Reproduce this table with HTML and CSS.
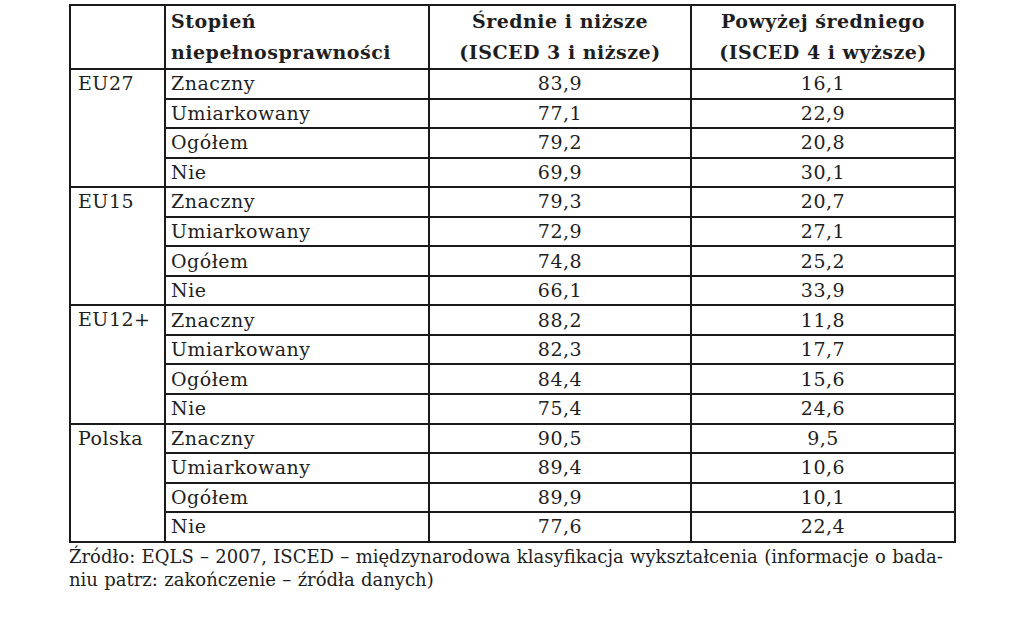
FILE: index.html
```html
<!DOCTYPE html>
<html lang="pl">
<head>
<meta charset="utf-8">
<link rel="stylesheet" href="styles.css">
</head>
<body>
<div class="page">
<table class="data">
  <colgroup>
    <col class="w-region">
    <col class="w-degree">
    <col class="w-mid">
    <col class="w-high">
  </colgroup>
  <thead>
    <tr>
      <th></th>
      <th class="h-degree">Stopień<br>niepełnosprawności</th>
      <th class="h-num">Średnie i niższe<br>(ISCED 3 i niższe)</th>
      <th class="h-num">Powyżej średniego<br>(ISCED 4 i wyższe)</th>
    </tr>
  </thead>
  <tbody>
    <tr><td class="region" rowspan="4">EU27</td><td>Znaczny</td><td class="num">83,9</td><td class="num">16,1</td></tr>
    <tr><td>Umiarkowany</td><td class="num">77,1</td><td class="num">22,9</td></tr>
    <tr><td>Ogółem</td><td class="num">79,2</td><td class="num">20,8</td></tr>
    <tr><td>Nie</td><td class="num">69,9</td><td class="num">30,1</td></tr>
    <tr><td class="region" rowspan="4">EU15</td><td>Znaczny</td><td class="num">79,3</td><td class="num">20,7</td></tr>
    <tr><td>Umiarkowany</td><td class="num">72,9</td><td class="num">27,1</td></tr>
    <tr><td>Ogółem</td><td class="num">74,8</td><td class="num">25,2</td></tr>
    <tr><td>Nie</td><td class="num">66,1</td><td class="num">33,9</td></tr>
    <tr><td class="region" rowspan="4">EU12+</td><td>Znaczny</td><td class="num">88,2</td><td class="num">11,8</td></tr>
    <tr><td>Umiarkowany</td><td class="num">82,3</td><td class="num">17,7</td></tr>
    <tr><td>Ogółem</td><td class="num">84,4</td><td class="num">15,6</td></tr>
    <tr><td>Nie</td><td class="num">75,4</td><td class="num">24,6</td></tr>
    <tr><td class="region" rowspan="4">Polska</td><td>Znaczny</td><td class="num">90,5</td><td class="num">9,5</td></tr>
    <tr><td>Umiarkowany</td><td class="num">89,4</td><td class="num">10,6</td></tr>
    <tr><td>Ogółem</td><td class="num">89,9</td><td class="num">10,1</td></tr>
    <tr><td>Nie</td><td class="num">77,6</td><td class="num">22,4</td></tr>
  </tbody>
</table>
<p class="source">Źródło: EQLS – 2007, ISCED – międzynarodowa klasyfikacja wykształcenia (informacje o bada-<br>niu patrz: zakończenie – źródła danych)</p>
</div>
</body>
</html>
```

FILE: styles.css
```css
html, body {
  margin: 0;
  padding: 0;
  background: #ffffff;
}
body {
  font-family: "DejaVu Serif", "Liberation Serif", serif;
  color: #1e1e1e;
}
.page {
  width: 887px;
  padding: 4px 0 0 69px;
}
.data {
  border-collapse: collapse;
  width: 887px;
  table-layout: fixed;
  font-size: 19px;
  letter-spacing: 0.5px;
}
.w-region { width: 95px; }
.w-degree { width: 264px; }
.w-mid { width: 262px; }
.w-high { width: 264px; }
.data th, .data td {
  box-sizing: border-box;
  border: 2px solid #1a1a1a;
  padding: 0 5px;
  height: 29.56px;
  line-height: 27px;
  vertical-align: middle;
  white-space: nowrap;
  overflow: hidden;
}
.data th {
  font-weight: bold;
  height: 61px;
  line-height: 31px;
  vertical-align: top;
  padding-top: 0;
}
.h-degree { text-align: left; }
.h-num { text-align: center; }
.data td.num { text-align: center; }
.data td.region { vertical-align: top; padding-left: 7px; }
.source {
  margin: 0;
  width: 887px;
  font-size: 18px;
  line-height: 23px;
  padding-top: 2px;
  word-spacing: 0.6px;
}
```
